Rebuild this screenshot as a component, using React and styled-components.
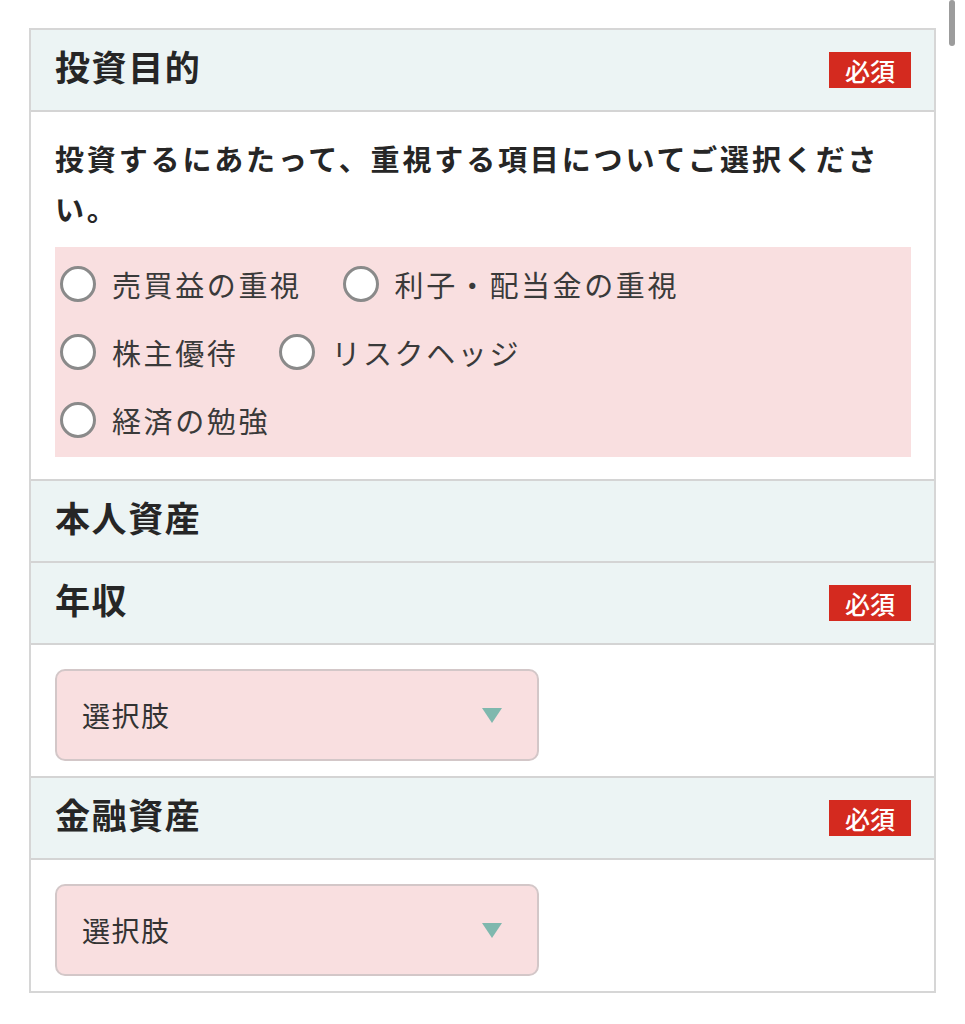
import styled, { createGlobalStyle } from "styled-components";

const GlobalStyle = createGlobalStyle`
  html, body {
    margin: 0;
    padding: 0;
    background: #fff;
  }
  body {
    font-family: "Noto Sans CJK JP", "Noto Sans", sans-serif;
    color: #333;
  }
`;

const Page = styled.div`
  padding: 28px 29px 30px 29px;
`;

const Form = styled.div`
  border: 2px solid #d6d6d6;
`;

const Header = styled.div`
  display: flex;
  align-items: center;
  justify-content: space-between;
  height: 80px;
  padding: 0 23px 0 24px;
  background: #ecf4f4;
  border-bottom: 2px solid #d4d4d4;
`;

const Title = styled.h2`
  margin: 0 0 9px;
  font-size: 35px;
  font-weight: 700;
  color: #262626;
  letter-spacing: 1.6px;
`;

const Badge = styled.span`
  display: flex;
  align-items: center;
  justify-content: center;
  width: 82px;
  height: 36px;
  background: #d42a1f;
  color: #fff;
  font-size: 25px;
  font-weight: 500;
`;

const Body = styled.div`
  padding: ${(p) => p.$pad || "24px 24px 15px"};
  background: #fff;
  border-bottom: 2px solid #d4d4d4;
  &:last-child {
    border-bottom: none;
  }
`;

const Question = styled.p`
  margin: 0 0 14px;
  font-size: 29px;
  line-height: 50px;
  font-weight: 700;
  color: #262626;
  letter-spacing: 2.85px;
`;

const Options = styled.div`
  padding: 3px 5px;
  background: #f9dfe0;
`;

const OptionRow = styled.div`
  display: flex;
  height: 68px;
`;

const Option = styled.label`
  display: flex;
  align-items: center;
  margin-right: 41px;
  font-size: 29px;
  letter-spacing: 2.6px;
  color: #3a3a3a;
`;

const Radio = styled.span`
  display: inline-block;
  box-sizing: border-box;
  width: 36px;
  height: 36px;
  border-radius: 50%;
  border: 3px solid #8a8a8a;
  background: #fff;
  margin-right: 16px;
`;

const Select = styled.div`
  display: flex;
  align-items: center;
  justify-content: space-between;
  box-sizing: border-box;
  width: 484px;
  height: 92px;
  padding: 0 35px 0 25px;
  background: #f9dfe0;
  border: 2px solid #d3c7c8;
  border-radius: 10px;
  font-size: 28px;
  letter-spacing: 1.5px;
  color: #333;
`;

const Caret = styled.span`
  width: 0;
  height: 0;
  border-left: 10px solid transparent;
  border-right: 10px solid transparent;
  border-top: 15px solid #7fb8ae;
`;

const ScrollThumb = styled.div`
  position: fixed;
  top: 0;
  right: 10px;
  width: 6px;
  height: 46px;
  border-radius: 3px;
  background: #9c9c9c;
`;

const Section = ({ title, required }) => (
  <Header>
    <Title>{title}</Title>
    {required && <Badge>必須</Badge>}
  </Header>
);

const optionRows = [
  ["売買益の重視", "利子・配当金の重視"],
  ["株主優待", "リスクヘッジ"],
  ["経済の勉強"],
];

export default function App() {
  return (
    <Page>
      <GlobalStyle />
      <ScrollThumb />
      <Form>
        <Section title="投資目的" required />
        <Body $pad="21px 23px 22px 24px">
          <Question>
            投資するにあたって、重視する項目についてご選択ください。
          </Question>
          <Options>
            {optionRows.map((row, i) => (
              <OptionRow key={i}>
                {row.map((o) => (
                  <Option key={o}>
                    <Radio />
                    {o}
                  </Option>
                ))}
              </OptionRow>
            ))}
          </Options>
        </Body>
        <Section title="本人資産" />
        <Section title="年収" required />
        <Body>
          <Select>
            選択肢
            <Caret />
          </Select>
        </Body>
        <Section title="金融資産" required />
        <Body>
          <Select>
            選択肢
            <Caret />
          </Select>
        </Body>
      </Form>
    </Page>
  );
}
